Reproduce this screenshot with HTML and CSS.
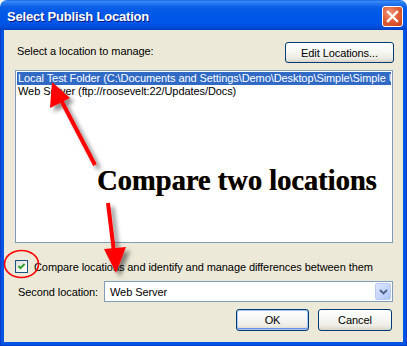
FILE: index.html
```html
<!DOCTYPE html>
<html>
<head>
<meta charset="utf-8">
<link rel="stylesheet" href="styles.css">
</head>
<body>
<div class="window">
  <div class="titlebar">
    <span class="title">Select Publish Location</span>
    <span class="close"><svg width="13" height="13" viewBox="0 0 13 13"><path d="M2 2 L11 11 M11 2 L2 11" stroke="#fff" stroke-width="2.4" stroke-linecap="square"/></svg></span>
  </div>
  <div class="frame">
    <div class="body">
      <div class="toprow">
        <span class="lbl">Select a location to manage:</span>
        <span class="btn edit">Edit Locations...</span>
      </div>
      <div class="listbox">
        <div class="item sel">Local Test Folder (C:\Documents and Settings\Demo\Desktop\Simple\Simple Update\Docs)</div>
        <div class="item">Web Server (ftp://roosevelt:22/Updates/Docs)</div>
      </div>
      <div class="checkrow">
        <span class="checkbox"><svg width="11" height="11" viewBox="0 0 11 11"><path d="M2.5 5 L4.5 7.2 L8.6 2.8" fill="none" stroke="#21A121" stroke-width="1.9"/></svg></span>
        <span class="lbl">Compare locations and identify and manage differences between them</span>
      </div>
      <div class="secondrow">
        <span class="lbl second">Second location:</span>
        <span class="combo"><span class="val">Web Server</span><span class="drop"><svg width="9" height="6" viewBox="0 0 9 6"><path d="M1 1 L4.5 4.5 L8 1" fill="none" stroke="#4D6185" stroke-width="1.8"/></svg></span></span>
      </div>
      <div class="actions">
        <span class="btn ok">OK</span>
        <span class="btn cancel">Cancel</span>
      </div>
    </div>
  </div>
  <div class="callout">Compare two locations</div>
  <svg class="annot" width="407" height="346" viewBox="0 0 407 346">
    <defs>
      <filter id="sh" x="-50%" y="-50%" width="200%" height="200%">
        <feDropShadow dx="4" dy="4" stdDeviation="2" flood-color="#000" flood-opacity="0.45"/>
      </filter>
    </defs>
    <g filter="url(#sh)" fill="#FF0000" stroke="#FF0000">
      <line x1="95" y1="165" x2="61" y2="100" stroke-width="4"/>
      <polygon points="52,82 70,98 50,108" stroke="none"/>
      <line x1="108" y1="203" x2="114" y2="252" stroke-width="4"/>
      <polygon points="116,273 104,249 126,247" stroke="none"/>
    </g>
    <ellipse cx="21.5" cy="264" rx="17" ry="13.5" fill="none" stroke="#FF0000" stroke-width="1.6"/>
  </svg>
</div>
</body>
</html>
```
FILE: styles.css
```css
html, body { margin: 0; padding: 0; background: #fff; }
body { width: 407px; height: 346px; overflow: hidden; }

.window {
  position: relative;
  width: 407px;
  height: 346px;
  display: flex;
  flex-direction: column;
  font-family: "Liberation Sans", Arial, sans-serif;
  font-size: 11px;
  letter-spacing: -0.08px;
  color: #000;
}

.titlebar {
  height: 30px;
  flex: none;
  display: flex;
  align-items: center;
  justify-content: space-between;
  padding: 0 4px 0 7px;
  border-radius: 7px 7px 0 0;
  background: linear-gradient(to bottom, #0A59D8 0px, #3B8DF7 1px, #2A7BF2 3px, #0B5FE6 7px, #0058E8 14px, #0055E6 24px, #0049D4 28px, #003DBE 30px);
}

.title {
  color: #fff;
  font-family: "Liberation Sans", Arial, sans-serif;
  font-weight: bold;
  font-size: 13px;
  letter-spacing: -0.2px;
  text-shadow: 1px 1px 0 #0A1883;
  margin-top: 2px;
}

.close {
  width: 19px;
  height: 19px;
  border: 1px solid #fff;
  border-radius: 3px;
  background: radial-gradient(circle at 35% 30%, #F19275 0%, #E2613A 45%, #CB3F16 100%);
  display: flex;
  align-items: center;
  justify-content: center;
  margin-top: 2px;
}

.frame {
  flex: 1;
  min-width: 0;
  display: flex;
  background: #0055E5;
  border-left: 1px solid #0C3ACB;
  border-right: 1px solid #0C3ACB;
  border-bottom: 1px solid #0C3ACB;
  padding: 0 3px 3px 3px;
  overflow: hidden;
}

.body {
  flex: 1;
  min-width: 0;
  background: #ECE9D8;
  display: flex;
  flex-direction: column;
  padding: 12px 10px 0 11px;
}

.toprow {
  display: flex;
  justify-content: space-between;
  align-items: center;
  height: 21px;
}
.toprow .lbl { padding-left: 2px; margin-top: -3px; }

.btn {
  box-sizing: border-box;
  height: 21px;
  border: 1px solid #003C74;
  border-radius: 3px;
  background: linear-gradient(to bottom, #FFFFFF 0%, #F8F8F5 40%, #ECEBE4 80%, #D8D4C8 100%);
  display: flex;
  align-items: center;
  justify-content: center;
  font-size: 11px;
}
.edit { width: 109px; margin-right: -1px; }

.listbox {
  box-sizing: border-box;
  min-width: 0;
  margin-top: 7px;
  height: 173px;
  border: 1px solid #7F9DB9;
  background: #fff;
  padding: 1px;
  overflow: hidden;
}
.item {
  height: 13px;
  line-height: 13px;
  white-space: nowrap;
  overflow: hidden;
  padding-left: 1px;
}
.item.sel { background: #316AC5; color: #fff; }

.checkrow {
  margin-top: 17px;
  display: flex;
  align-items: center;
  height: 13px;
}
.checkbox {
  box-sizing: border-box;
  width: 13px;
  height: 13px;
  border: 1px solid #1C5180;
  background: linear-gradient(135deg, #DCDCD7 0%, #F4F4F0 60%, #FFFFFF 100%);
  display: flex;
  align-items: center;
  justify-content: center;
}
.checkrow .lbl { margin-left: 6px; }

.secondrow {
  margin-top: 8px;
  display: flex;
  align-items: center;
  height: 21px;
}
.second { width: 89px; padding-left: 3px; box-sizing: border-box; }
.combo {
  box-sizing: border-box;
  flex: 1;
  height: 21px;
  border: 1px solid #7F9DB9;
  background: #fff;
  display: flex;
  align-items: center;
  justify-content: space-between;
  padding: 1px;
}
.combo .val { padding-left: 4px; }
.drop {
  box-sizing: border-box;
  width: 16px;
  height: 17px;
  border: 1px solid #B9CBF3;
  border-radius: 2px;
  background: linear-gradient(135deg, #DDE6FE 0%, #C1D3FB 60%, #B2C7F8 100%);
  display: flex;
  align-items: center;
  justify-content: center;
}

.actions {
  margin-top: 7px;
  display: flex;
  justify-content: flex-end;
  gap: 9px;
  padding-right: 1px;
}
.actions .btn { height: 22px; }
.ok { width: 73px; box-shadow: inset 0 0 0 1px #A9C6F7, inset 0 -1px 0 1px #6E8FE0; }
.cancel { width: 74px; }

.callout {
  position: absolute;
  left: 97px;
  top: 164px;
  font-family: "Liberation Serif", "Times New Roman", serif;
  font-weight: bold;
  font-size: 28.5px;
  line-height: 34px;
  letter-spacing: 0;
  color: #000;
  white-space: nowrap;
  text-shadow: 0.5px 0 0 #7A4A10;
}

.annot {
  position: absolute;
  left: 0;
  top: 0;
  pointer-events: none;
}
```
